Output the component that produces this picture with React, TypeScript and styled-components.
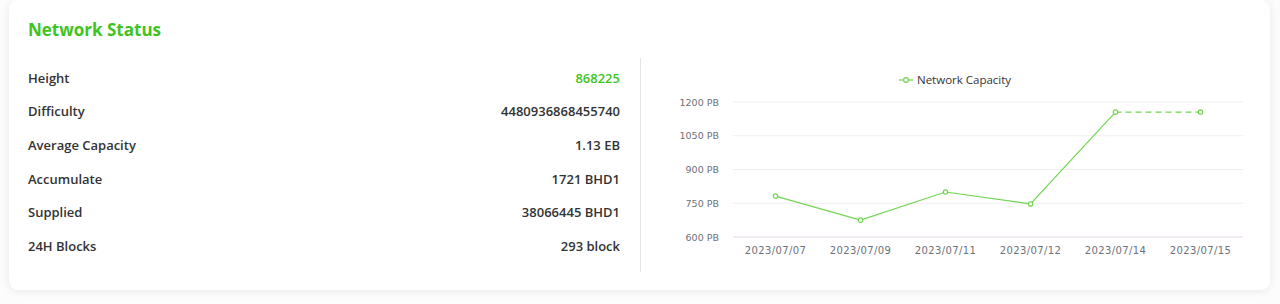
import styled, { createGlobalStyle } from 'styled-components'

const GlobalStyle = createGlobalStyle`
  html, body {
    margin: 0;
    padding: 0;
    background: #fcfcfc;
  }
`

const Page = styled.div`
  padding: 0 10px 14px 9px;
`

const Card = styled.section`
  background: #fff;
  border-radius: 9px;
  box-shadow: 0 1px 8px rgba(0, 0, 0, 0.08);
  padding: 16px 19px 18px;
  font-family: 'Open Sans', 'Noto Sans', sans-serif;
`

const Title = styled.h2`
  margin: 0;
  font-size: 17px;
  line-height: 28px;
  font-weight: 700;
  color: #3fc41d;
`

const Body = styled.div`
  display: flex;
  margin-top: 14px;
  height: 214px;
`

const StatList = styled.div`
  width: 592px;
  margin-right: 20px;
  padding-top: 3px;
`

const StatRow = styled.div`
  display: flex;
  justify-content: space-between;
  align-items: center;
  height: 33.6px;
  font-size: 13px;
  font-weight: 600;
  color: #333;
`

const StatValue = styled.span<{ highlight?: boolean }>`
  color: ${p => (p.highlight ? '#3fc41d' : '#333')};
`

const ChartPanel = styled.div`
  flex: 1;
  border-left: 1px solid #e4e4e4;
`

// ─── Chart ───────────────────────────────────────────────────────────────────

const stats = [
  { label: 'Height', value: '868225', highlight: true },
  { label: 'Difficulty', value: '4480936868455740' },
  { label: 'Average Capacity', value: '1.13 EB' },
  { label: 'Accumulate', value: '1721 BHD1' },
  { label: 'Supplied', value: '38066445 BHD1' },
  { label: '24H Blocks', value: '293 block' },
]

const points = [
  { date: '2023/07/07', value: 782 },
  { date: '2023/07/09', value: 675 },
  { date: '2023/07/11', value: 800 },
  { date: '2023/07/12', value: 747 },
  { date: '2023/07/14', value: 1155 },
  { date: '2023/07/15', value: 1155 },
]

const LINE = '#72d552'
const X0 = 92
const X1 = 602
const STEP = (X1 - X0) / points.length
const yOf = (v: number) => 179 - ((v - 600) / 150) * 33.75
const xOf = (i: number) => X0 + STEP / 2 + STEP * i

function CapacityChart() {
  const ticks = [1200, 1050, 900, 750, 600]
  const solid = points.slice(0, 5).map((p, i) => `${xOf(i)},${yOf(p.value)}`).join(' ')
  return (
    <svg width="610" height="214" viewBox="0 0 610 214">
      <g>
        <line x1="258" y1="22" x2="272" y2="22" stroke={LINE} strokeWidth="1.2" />
        <circle cx="265" cy="22" r="2.4" fill="#fff" stroke={LINE} strokeWidth="1.2" />
        <text x="276" y="26" fontSize="11.5" fill="#333" fontFamily="'Open Sans', sans-serif">
          Network Capacity
        </text>
      </g>
      {ticks.map(t => (
        <g key={t}>
          <line
            x1={X0}
            x2={X1}
            y1={yOf(t)}
            y2={yOf(t)}
            stroke={t === 600 ? '#e6d8ea' : '#eeeeee'}
            strokeWidth="1"
          />
          <text
            x="78"
            y={yOf(t) + 3.5}
            textAnchor="end"
            fontSize="9.5"
            fill="#6e7079"
            fontFamily="'DejaVu Sans', sans-serif"
          >
            {t} PB
          </text>
        </g>
      ))}
      {points.map((p, i) => (
        <text
          key={p.date}
          x={xOf(i)}
          y="196"
          textAnchor="middle"
          fontSize="10"
          letterSpacing="0.4"
          fill="#6e7079"
          fontFamily="'DejaVu Sans', sans-serif"
        >
          {p.date}
        </text>
      ))}
      <polyline points={solid} fill="none" stroke={LINE} strokeWidth="1.2" />
      <line
        x1={xOf(4)}
        y1={yOf(points[4].value)}
        x2={xOf(5)}
        y2={yOf(points[5].value)}
        stroke={LINE}
        strokeWidth="1.2"
        strokeDasharray="6 4"
      />
      {points.map((p, i) => (
        <circle
          key={p.date}
          cx={xOf(i)}
          cy={yOf(p.value)}
          r="2.2"
          fill="#fff"
          stroke={LINE}
          strokeWidth="1.2"
        />
      ))}
    </svg>
  )
}

export default function App() {
  return (
    <>
      <GlobalStyle />
      <Page>
        <Card>
          <Title>Network Status</Title>
          <Body>
            <StatList>
              {stats.map(s => (
                <StatRow key={s.label}>
                  <span>{s.label}</span>
                  <StatValue highlight={s.highlight}>{s.value}</StatValue>
                </StatRow>
              ))}
            </StatList>
            <ChartPanel>
              <CapacityChart />
            </ChartPanel>
          </Body>
        </Card>
      </Page>
    </>
  )
}
